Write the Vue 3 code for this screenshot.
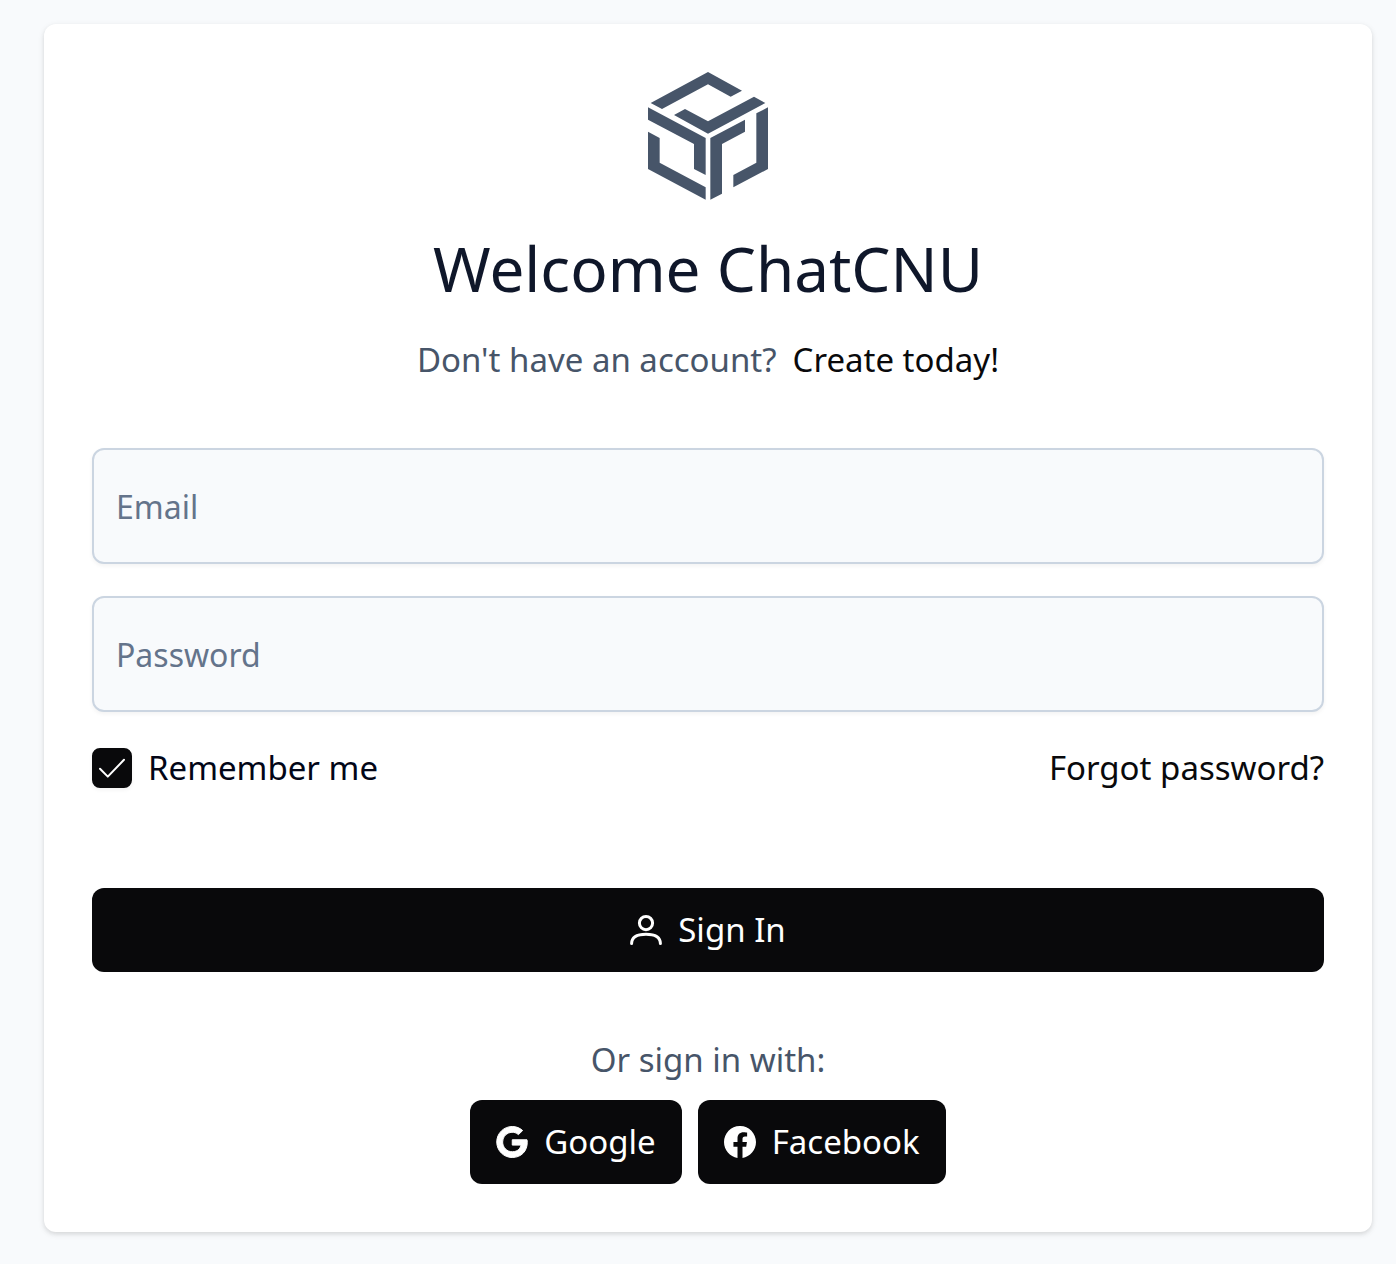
<script setup>
import { ref } from 'vue'

const email = ref('')
const password = ref('')
const remember = ref(true)
</script>

<template>
  <main class="page">
    <form class="card" @submit.prevent>
      <header class="intro">
        <svg class="logo" viewBox="30 30 360 384" aria-hidden="true">
          <path d="M210 30 312 86 278 104 210 67 72 141 38 123Z" />
          <path d="M348 104 382 123 210 215 108 159 141 141 210 178Z" />
          <path d="M30 136 203 228V339L168 321V246L30 173Z" />
          <path d="M30 209 65 228V302L203 376V413L30 321Z" />
          <path d="M217 228 321 173V209L252 246V395L217 413Z" />
          <path d="M390 136V321L286 376V339L355 302V154Z" />
        </svg>
        <h1>Welcome ChatCNU</h1>
        <p class="signup">
          <span>Don't have an account?</span>
          <a href="#">Create today!</a>
        </p>
      </header>

      <div class="fields">
        <input v-model="email" class="field" type="email" placeholder="Email" aria-label="Email" />
        <input v-model="password" class="field" type="password" placeholder="Password" aria-label="Password" />
      </div>

      <div class="options">
        <div class="remember">
          <span class="tick">
            <input id="remember" v-model="remember" type="checkbox" />
            <svg v-if="remember" viewBox="0 0 40 40" aria-hidden="true">
              <path d="M8 20.8 15.8 28.6 32 11.8" />
            </svg>
          </span>
          <label for="remember">Remember me</label>
        </div>
        <a href="#">Forgot password?</a>
      </div>

      <button class="btn submit" type="submit">
        <svg class="line-icon" viewBox="0 0 32 32" aria-hidden="true">
          <circle cx="16" cy="9.1" r="6.6" />
          <path d="M1.6 29.6C1.6 22.4 8 20.2 16 20.2S30.4 22.4 30.4 29.6" />
        </svg>
        <span>Sign In</span>
      </button>

      <section class="social">
        <p>Or sign in with:</p>
        <div class="providers">
          <button class="btn" type="button">
            <svg class="google" viewBox="-8 0 504 512" aria-hidden="true">
              <path d="M488 261.8C488 403.3 391.1 504 248 504 110.8 504 0 393.2 0 256S110.8 8 248 8c66.8 0 123 24.5 166.3 64.9l-67.5 64.9C258.5 52.6 94.3 116.6 94.3 256c0 86.5 69.1 156.6 153.7 156.6 98.2 0 135-70.4 140.8-106.9H248v-85.3h236.1c2.3 12.7 3.9 24.9 3.9 41.4z" />
            </svg>
            <span>Google</span>
          </button>
          <button class="btn" type="button">
            <svg viewBox="0 0 16 16" aria-hidden="true">
              <path d="M16 8.049c0-4.446-3.582-8.05-8-8.05C3.58 0 0 3.603 0 8.05c0 4.017 2.926 7.347 6.75 7.951v-5.625H4.72V8.05h2.03V6.275c0-2.017 1.195-3.131 3.022-3.131.876 0 1.791.157 1.791.157v1.98h-1.009c-.993 0-1.303.621-1.303 1.258v1.51h2.218l-.354 2.326H9.25V16C13.074 15.396 16 12.066 16 8.049z" />
            </svg>
            <span>Facebook</span>
          </button>
        </div>
      </section>
    </form>
  </main>
</template>

<style>
body {
  margin: 0;
  background: #f8fafc;
}
</style>

<style scoped>
.page {
  padding: 24px 24px 32px 44px;
  font-family: "Segoe UI", "Noto Sans", "Open Sans", sans-serif;
  font-size: 33px;
  line-height: 48px;
  color: #020617;
}

.card {
  padding: 48px;
  border-radius: 12px;
  background: #fff;
  box-shadow: 0 2px 6px rgba(0, 0, 0, 0.1), 0 2px 4px rgba(0, 0, 0, 0.06);
}

.intro {
  display: flex;
  flex-direction: column;
  align-items: center;
}

.logo {
  width: 120px;
  height: 128px;
  fill: #475569;
}

h1 {
  margin: 32px 0;
  font-size: 62px;
  font-weight: 400;
  line-height: 72px;
  color: #0f172a;
}

p {
  margin: 0;
  color: #475569;
}

.signup {
  display: flex;
  flex-wrap: wrap;
  gap: 16px;
}

a {
  color: #09090b;
  text-decoration: none;
}

.fields {
  display: flex;
  flex-direction: column;
  gap: 32px;
  margin-top: 64px;
}

.field {
  box-sizing: border-box;
  width: 100%;
  height: 116px;
  padding: 0 22px;
  border: 2px solid #cbd5e1;
  border-radius: 12px;
  background: #f8fafc;
  box-shadow: 0 2px 4px rgba(18, 18, 23, 0.05);
  font: inherit;
  font-size: 32px;
  color: #334155;
}

.field::placeholder {
  color: #64748b;
  opacity: 1;
}

.options {
  display: flex;
  align-items: center;
  justify-content: space-between;
  margin: 32px 0 96px;
}

.remember {
  display: flex;
  align-items: center;
  gap: 16px;
}

.tick {
  position: relative;
  width: 40px;
  height: 40px;
}

.tick input {
  display: block;
  width: 40px;
  height: 40px;
  margin: 0;
  appearance: none;
  border: 2px solid #cbd5e1;
  border-radius: 8px;
  background: #fff;
  box-shadow: 0 2px 4px rgba(18, 18, 23, 0.05);
}

.tick input:checked {
  border-color: #09090b;
  background: #09090b;
}

.tick svg {
  position: absolute;
  inset: 0;
  fill: none;
  stroke: #fff;
  stroke-width: 2;
  stroke-linecap: round;
  stroke-linejoin: round;
  pointer-events: none;
}

.btn {
  display: flex;
  align-items: center;
  justify-content: center;
  gap: 16px;
  height: 84px;
  padding: 0 26px;
  border: 0;
  border-radius: 12px;
  background: #09090b;
  font: inherit;
  color: #fff;
}

.btn svg {
  width: 32px;
  height: 32px;
  fill: currentColor;
}

.btn .google {
  stroke: currentColor;
  stroke-width: 16;
}

.btn .line-icon {
  fill: none;
  stroke: currentColor;
  stroke-width: 3;
  stroke-linecap: round;
}

.submit {
  width: 100%;
}

.social {
  display: flex;
  flex-direction: column;
  align-items: center;
  gap: 16px;
  margin-top: 64px;
}

.providers {
  display: flex;
  gap: 16px;
}
</style>
